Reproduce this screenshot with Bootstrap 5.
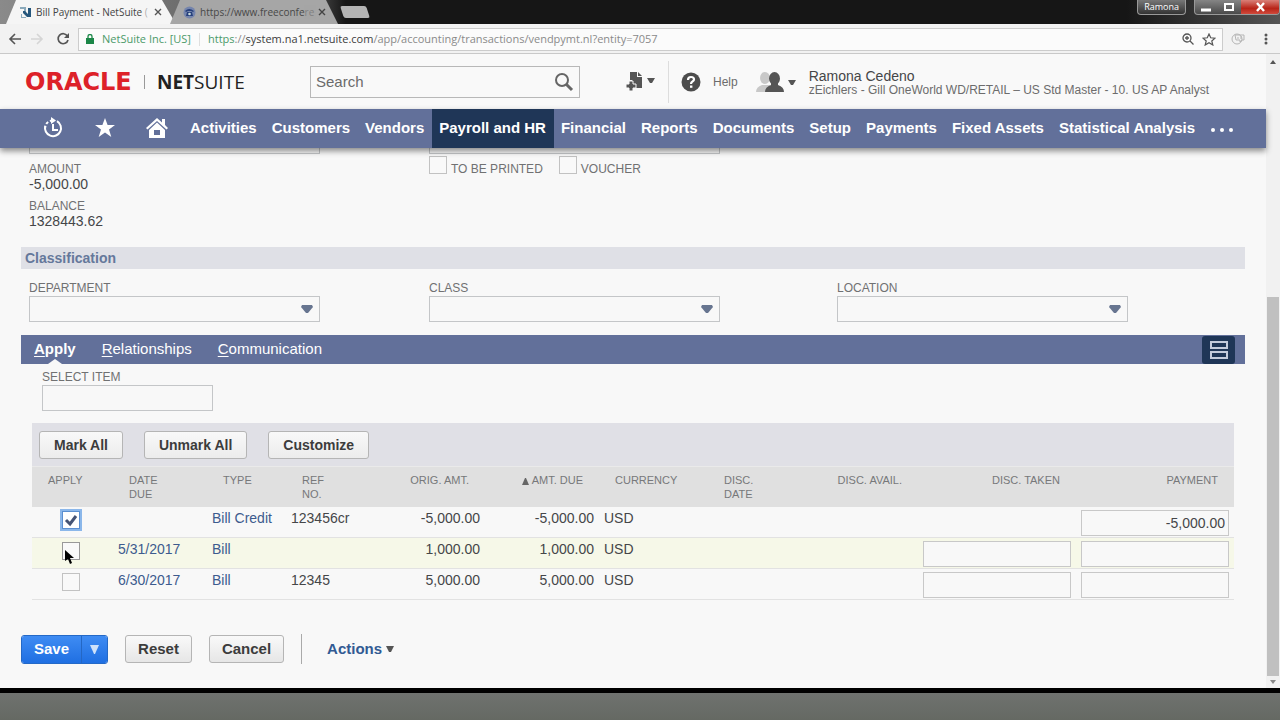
<!DOCTYPE html>
<html lang="en">
<head>
<meta charset="utf-8">
<meta name="viewport" content="width=device-width, initial-scale=1">
<title>Bill Payment - NetSuite</title>
<link href="https://cdn.jsdelivr.net/npm/bootstrap@5.3.0/dist/css/bootstrap.min.css" rel="stylesheet">
<style>
  :root { --bar: #62709a; --navy: #1f3657; --line: #c4c6c8; --paper: #f8f8f8; --label: #707172; --ink: #454648; --blue: #3d5b8e; }
  body { font-family: "Liberation Sans", Arial, sans-serif; font-size: 14px; line-height: 16px; color: var(--ink); background: var(--paper); }
  a { text-decoration: none; color: inherit; }
  svg { display: block; flex: none; }
  .chrome-ui { font-family: "Open Sans", sans-serif; }

  /* browser tabs */
  .tab-strip { height: 24px; background: linear-gradient(90deg, #8a8a8a, #5a5a5a 24%, #161616 27%, #161616 88%, #555); padding-left: 6px; }
  .tab-item { height: 24px; font-size: 10px; color: #444; width: 170px; background: #f5f5f5; clip-path: polygon(10px 0, 156px 0, 100% 100%, 0 100%); padding: 0 14px 0 13px; }
  .tab-item.dim { background: #a6a6a6; margin-left: -6px; width: 168px; color: #484848; }
  .tab-title { white-space: nowrap; flex: 1; }
  .tab-title i { font-style: normal; opacity: .4; }
  .tab-new { width: 26px; height: 12px; background: #b4b4b4; transform: skewX(18deg); border-radius: 2px; }
  .tab-close, .win-btn, .tool-btn { border: 0; background: none; padding: 0; color: inherit; }
  .win-user { height: 15px; border: 1px solid #999; border-top: 0; border-radius: 0 0 4px 4px; background: linear-gradient(#777, #333); color: #fff; font-size: 9px; line-height: 13px; padding: 0 6px; }
  .win-set { height: 15px; border: 1px solid #999; border-top: 0; border-radius: 0 0 4px 4px; overflow: hidden; background: linear-gradient(#858585, #4a4a4a); }
  .win-btn { width: 23px; }
  .win-btn.shut { width: 38px; background: linear-gradient(#d98078, #b82418 60%, #d04a3c); }

  /* address bar */
  .tool-row { height: 30px; background: #f2f2f2; border-bottom: 1px solid #c9c9c9; padding: 4px 10px 3px 8px; }
  .address { background: #fbfbfb; border: 1px solid #ccc; height: 23px; font-size: 11px; color: #8a8a8a; padding: 0 6px 0 7px; }
  .address .site { color: #3b3b3b; }
  .address .secure { color: #4b9a69; }

  /* page header */
  .page-head { height: 55px; padding-left: 25px; background: #f9f9f9; }
  .logo-oracle { font: bold 24px "DejaVu Sans", sans-serif; color: #dd2229; width: 119px; }
  .logo-suite { font: 19px "Open Sans", sans-serif; color: #222; border-left: 1px solid #999; line-height: 14px; padding-left: 12px; width: 166px; }
  .search-box { width: 270px; height: 32px; border: 1px solid #b8b8b8; background: #f9f9f9; }
  .search-box input { border: 0; background: none; outline: 0; font-size: 15px; color: #6b6b6b; padding: 0 5px; width: 100%; }
  .search-box input::placeholder { color: #6b6b6b; opacity: 1; }
  .create-menu { margin-left: 46px; }
  .head-rule { width: 1px; height: 42px; background: #ddd; margin: 0 8px 0 12px; }
  .role-menu { margin-left: 18px; margin-right: 13px; }
  .small-line { font-size: 12px; line-height: 12px; color: #6c6c6c; }

  .main-nav { background: var(--bar); height: 39px; padding-left: 27px; box-shadow: 0 3px 6px rgba(0,0,0,.45); position: relative; z-index: 2; color: #fff; font-weight: bold; font-size: 15px; white-space: nowrap; }
  .main-nav a { display: flex; align-items: center; height: 38px; padding: 0 8px 0 7px; }
  .main-nav a.pic { width: 52px; padding: 0; justify-content: center; }
  .main-nav a.on { background: var(--navy); height: 39px; padding-bottom: 1px; }

  /* form body */
  .sheet { padding: 0 21px; }
  .fld-label { font-size: 12px; line-height: 15px; color: var(--label); display: block; }
  .fld-value { line-height: 14px; }
  .fld { width: 291px; max-width: 95%; height: 26px; border: 1px solid var(--line); background: var(--paper); }
  .fld-item { width: 171px; }
  .item-row { padding: 6px 0 12px 10px; }
  select.fld { appearance: none; background: var(--paper) url("data:image/svg+xml,%3Csvg xmlns='http://www.w3.org/2000/svg' width='12' height='8'%3E%3Cpath d='M1 0H11L12 2 7 8H5L0 2Z' fill='%23677590'/%3E%3C/svg%3E") no-repeat right 6px center; }
  .peek { height: 6px; overflow: hidden; display: flex; align-items: flex-end; }
  .tick { appearance: none; width: 18px; height: 18px; border: 1px solid #c2c2c2; background: #f9f9f9; margin: 0; flex: none; display: block; }
  .tick.hot { border-color: #999; }
  .tick:checked { border-color: #5b8fd0; box-shadow: 0 0 0 2px #8bb7ea; background: #fff url("data:image/svg+xml,%3Csvg xmlns='http://www.w3.org/2000/svg' width='16' height='16'%3E%3Cpath d='M3 8L7 12 13 4' fill='none' stroke='%23455475' stroke-width='3'/%3E%3C/svg%3E") center no-repeat; }
  .tick-row { padding-top: 2px; }
  .tick-row .fld-label { padding-top: 6px; }
  .section-bar { background: #dfe0e6; color: #65789b; font-weight: bold; height: 22px; line-height: 22px; padding-left: 4px; font-size: 14px; margin: 19px 0 0; }
  .sub-tabs { background: var(--bar); height: 29px; color: #fff; font-size: 15px; padding: 0 10px 0 13px; margin-top: 13px; gap: 26px; }
  .sub-tabs a { line-height: 28px; height: 29px; }
  .sub-tabs u { text-underline-offset: 2px; }
  .sub-tabs .on { position: relative; font-weight: bold; }
  .sub-tabs .on::after { content: ""; position: absolute; bottom: 0; left: 50%; margin-left: -7px; border: 7px solid transparent; border-top: 0; border-bottom: 5px solid var(--paper); }
  .view-btn { width: 33px; height: 28px; background: var(--navy); border: 0; border-radius: 3px; }

  .list-area { margin: 0 11px; }
  .list-tools { background: #e0e0e6; height: 43px; padding-left: 7px; gap: 21px; }
  .plain-btn { height: 28px; border: 1px solid #b5b5b5; border-radius: 3px; background: linear-gradient(#f9f9f9, #ececec); color: #3c3c3c; font-weight: bold; font-size: 14px; line-height: 16px; padding: 0 14px; }
  .foot-btns { margin-top: 34px; gap: 17px; }
  .foot-btns .plain-btn { font-size: 15px; padding: 0 12px; background: linear-gradient(#f9f9f9, #e6e6e6); }

  .pay-table { table-layout: fixed; width: 100%; border-collapse: separate; border-spacing: 0; }
  .pay-table th { font-weight: normal; font-size: 11px; line-height: 14px; color: #77787a; height: 41px; background: #e0e0e0; border-top: 1px solid #eaeaea; padding: 6px 16px 0; vertical-align: top; white-space: nowrap; }
  .pay-table td { height: 31px; border-bottom: 1px solid #e2e2e2; padding: 3px 5px 0; vertical-align: top; white-space: nowrap; }
  .pay-table .hover-row td { background: #f6f8e8; }
  .pay-table .cell-fld { width: 100%; height: 26px; border: 1px solid #c8c8c8; background: var(--paper); display: block; text-align: right; padding: 0 3px; color: var(--ink); }
  .pay-table a { color: var(--blue); }
  .pay-table .tick { margin: 1px 0 0 25px; }
  .cursor { position: absolute; left: 33px; top: 12px; }

  .save-pair { height: 29px; border-radius: 3px; overflow: hidden; border: 1px solid #2469c7; }
  .save-pair button { border: 0; background: linear-gradient(#3f8cf3, #1f6fe2); color: #fff; font-weight: bold; font-size: 15px; padding: 0 12px; }
  .save-pair button + button { border-left: 1px solid #2467c4; padding: 0 8px; }
  .foot-rule { width: 1px; height: 30px; background: #aaa; }
  .actions-menu { color: #315a93; font-size: 15px; }

  /* scroll rail and the strip below the window */
  .rail { width: 14px; flex: none; background: #f1f1f1; padding: 4px 1px 3px; }
  .rail-gap { flex: 228; }
  .rail-thumb { flex: 377; background: #c0c0c0; }
  .desk { height: 32px; border-top: 5px solid #000; background: linear-gradient(#6f726f, #656963); }
</style>
</head>
<body class="d-flex flex-column min-vh-100">
<div class="tab-strip d-flex chrome-ui">
  <div class="tab-item d-flex align-items-center gap-1">
    <svg width="13" height="13" viewBox="0 0 13 13"><path d="M1 1h6v7H5V3H1z" fill="#8aa9bb"/><path d="M4 5h2l3 3V2h3v9H8L4 7z" fill="#25567c"/><path d="M3 8v3h4v1H2V8z" fill="#8aa9bb"/></svg>
    <span class="tab-title">Bill Payment - NetSuite <i>(</i></span>
    <button class="tab-close" aria-label="Close tab"><svg width="8" height="8" viewBox="0 0 8 8"><path d="M1 1l6 6M7 1L1 7" stroke="#555" stroke-width="1.4"/></svg></button>
  </div>
  <div class="tab-item dim d-flex align-items-center gap-1">
    <svg width="13" height="13" viewBox="0 0 13 13"><circle cx="6.500" cy="6.500" r="6" fill="#7585ad"/><path d="M2 5q4-4 9 0l-1 1-2-1H5L3 6zM4 6h5l1 4H3z" fill="#27407c"/><circle cx="6.500" cy="8" r="1.300" fill="#cdd"/></svg>
    <span class="tab-title">https://www.freeconfe<i>re</i></span>
    <button class="tab-close" aria-label="Close tab"><svg width="8" height="8" viewBox="0 0 8 8"><path d="M1 1l6 6M7 1L1 7" stroke="#444" stroke-width="1.4"/></svg></button>
  </div>
  <div class="tab-new my-auto ms-1"></div>
  <div class="win-user ms-auto me-2">Ramona</div>
  <div class="win-set d-flex">
    <button class="win-btn" aria-label="Minimize"><svg width="22" height="14"><path d="M6 10h10" stroke="#fff" stroke-width="3"/></svg></button>
    <button class="win-btn" aria-label="Restore"><svg width="22" height="14"><rect x="7" y="4" width="8" height="6" fill="none" stroke="#fff" stroke-width="2"/></svg></button>
    <button class="win-btn shut" aria-label="Close"><svg width="38" height="14"><path d="M16 3l7 8M23 3l-7 8" stroke="#fff" stroke-width="2.400"/></svg></button>
  </div>
</div>

<div class="tool-row d-flex align-items-center chrome-ui">
  <button class="tool-btn" aria-label="Back"><svg width="14" height="14" viewBox="0 0 14 14"><path d="M13 7H2M7 2L2 7l5 5" fill="none" stroke="#555" stroke-width="1.600"/></svg></button>
  <button class="tool-btn ms-2" aria-label="Forward"><svg width="14" height="14" viewBox="0 0 14 14"><path d="M1 7h11M7 2l5 5-5 5" fill="none" stroke="#d5d5d5" stroke-width="1.600"/></svg></button>
  <button class="tool-btn mx-2 ps-1" aria-label="Reload"><svg width="14" height="14" viewBox="0 0 14 14"><path d="M11.500 4.200A5 5 0 1 0 12 8" fill="none" stroke="#555" stroke-width="1.700"/><path d="M13 1v5H8z" fill="#555"/></svg></button>
  <div class="address d-flex align-items-center flex-grow-1">
    <svg width="8" height="10" viewBox="0 0 8 10"><rect y="4" width="8" height="6" fill="#1c8748"/><path d="M2 4V2.500a2 2 0 0 1 4 0V4" fill="none" stroke="#1c8748" stroke-width="1.300"/></svg>
    <span class="ms-2 secure">NetSuite Inc. [US]</span>
    <span class="vr mx-2 my-1"></span>
    <span><span class="secure">https</span>://<span class="site">system.na1.netsuite.com</span>/app/accounting/transactions/vendpymt.nl?entity=7057</span>
    <svg class="ms-auto" width="12" height="12" viewBox="0 0 12 12" fill="none" stroke="#555" stroke-width="1.300"><circle cx="5" cy="5" r="4"/><path d="M8 8l3.500 3.500M5 3v4M3 5h4"/></svg>
    <svg class="ms-2" width="14" height="13" viewBox="0 0 14 13"><path d="M7 1l1.700 3.800 4.300.4-3.200 2.800 1 4L7 9.800 3.200 12l1-4L1 5.200l4.300-.4z" fill="none" stroke="#555" stroke-width="1.200"/></svg>
  </div>
  <svg class="ms-2" width="15" height="14" viewBox="0 0 15 14" fill="none" stroke="#b5b5b5"><circle cx="6" cy="7" r="5"/><path d="M4 3h9v5h-2l-2 2V8H5zM7 5v2M10 4v3"/></svg>
  <svg class="ms-3" width="8" height="14"><circle cx="4" cy="3" r="1.500" fill="#555"/><circle cx="4" cy="7" r="1.500" fill="#555"/><circle cx="4" cy="11" r="1.500" fill="#555"/></svg>
</div>

<div class="d-flex flex-grow-1">
<div class="flex-grow-1">
  <header class="page-head d-flex align-items-center">
    <div class="logo-oracle">ORACLE</div>
    <div class="logo-suite"><b>NET</b>SUITE</div>
    <form class="search-box d-flex align-items-center pe-1">
      <input type="text" placeholder="Search" aria-label="Search">
      <button class="tool-btn" type="button" aria-label="Run search"><svg width="22" height="22" viewBox="0 0 22 22" fill="none" stroke="#666"><circle cx="9" cy="9" r="6" stroke-width="2"/><path d="M13 13l6 6" stroke-width="3"/></svg></button>
    </form>
    <svg class="create-menu" width="30" height="20" viewBox="0 0 30 20" fill="#555"><path d="M4 0h7v5h5v11H9v-4H6V8H4z"/><path d="M12 0l4 4h-4z"/><path d="M3 9h4v3h3v4H7v3H3v-3H0v-4h3z" stroke="#f9f9f9" stroke-width="1"/><path d="M21 6h8l-3 5h-2z"/></svg>
    <span class="head-rule"></span>
    <a href="#" class="d-flex align-items-center small-line ms-1"><svg class="me-2" width="20" height="20" viewBox="0 0 20 20"><circle cx="10" cy="10" r="9.500" fill="#4d4d4d"/><path d="M7 8q0-3 3-3t3 2.500c0 2-3 2-3 4.500" fill="none" stroke="#fff" stroke-width="2.200"/><rect x="9" y="13.500" width="2.400" height="2.300" fill="#fff"/></svg><span class="ms-1">Help</span></a>
    <svg class="role-menu" width="40" height="22" viewBox="0 0 40 22"><g fill="#c8c8c8"><ellipse cx="9" cy="7" rx="5" ry="6"/><path d="M0 21q0-5 6-7h8v7z"/></g><g fill="#555"><ellipse cx="18.500" cy="7.500" rx="5.500" ry="6.500"/><path d="M9 21q0-5 6-7v-3h7v3q6 2 6 7z"/><path d="M32 9h8l-3 5h-2z"/></g></svg>
    <div class="text-nowrap"><div>Ramona Cedeno</div><div class="small-line">zEichlers - Gill OneWorld WD/RETAIL – US Std Master - 10. US AP Analyst</div></div>
  </header>

  <nav class="main-nav d-flex">
    <a href="#" class="pic" aria-label="Recent"><svg width="22" height="22" viewBox="0 0 22 22" fill="none" stroke="#fff" stroke-width="2"><path d="M15 4.200A8 8 0 1 1 3.300 9"/><path d="M11 7v6h5"/><path d="M3 12q0-7 7-8.500" stroke-dasharray="3 2"/><path d="M9 0l5 3.500L9 7z" fill="#fff" stroke="none"/></svg></a>
    <a href="#" class="pic" aria-label="Shortcuts"><svg width="20" height="20" viewBox="0 0 20 20"><path d="M10 0l2.600 7H20l-6 4.600 2.300 7.400L10 14.600 3.700 19 6 11.600 0 7h7.400z" fill="#fff"/></svg></a>
    <a href="#" class="pic" aria-label="Home"><svg width="22" height="22" viewBox="0 0 22 22"><path d="M11 1L0 11l1.500 1.500L11 4l9.500 8.500L22 11l-3-3V2h-3v3.500z" fill="#fff"/><path d="M11 5.500L3 13v8h16v-8zM8 18v-5h6v5z" fill="#fff" fill-rule="evenodd"/></svg></a>
    <a href="#">Activities</a><a href="#">Customers</a><a href="#">Vendors</a><a href="#" class="on">Payroll and HR</a><a href="#">Financial</a><a href="#">Reports</a><a href="#">Documents</a><a href="#">Setup</a><a href="#">Payments</a><a href="#">Fixed Assets</a><a href="#">Statistical Analysis</a>
    <a href="#" aria-label="More"><svg width="24" height="8"><circle cx="3" cy="6" r="2" fill="#fff"/><circle cx="12" cy="6" r="2" fill="#fff"/><circle cx="21" cy="6" r="2" fill="#fff"/></svg></a>
  </nav>

  <main class="sheet">
    <div class="row g-0">
      <div class="col-4 ps-2">
        <div class="peek"><input class="fld" aria-label="Account"></div>
        <div class="mt-2"><span class="fld-label">AMOUNT</span><div class="fld-value">-5,000.00</div></div>
        <div class="mt-2"><span class="fld-label">BALANCE</span><div class="fld-value">1328443.62</div></div>
      </div>
      <div class="col-4">
        <div class="peek"><input class="fld" aria-label="Memo"></div>
        <div class="tick-row d-flex">
          <input type="checkbox" class="tick" id="printed"><label class="fld-label ms-1 me-3" for="printed">TO BE PRINTED</label>
          <input type="checkbox" class="tick" id="voucher"><label class="fld-label ms-1" for="voucher">VOUCHER</label>
        </div>
      </div>
    </div>
    <h2 class="section-bar">Classification</h2>
    <div class="row g-0 pt-2 mt-1">
      <div class="col-4 ps-2"><label class="fld-label" for="dep">DEPARTMENT</label><select class="fld d-block" id="dep"></select></div>
      <div class="col-4"><label class="fld-label" for="cls">CLASS</label><select class="fld d-block" id="cls"></select></div>
      <div class="col-4"><label class="fld-label" for="loc">LOCATION</label><select class="fld d-block" id="loc"></select></div>
    </div>
    <div class="sub-tabs d-flex align-items-center">
      <a href="#" class="on"><u>A</u>pply</a><a href="#"><u>R</u>elationships</a><a href="#"><u>C</u>ommunication</a>
      <button class="view-btn ms-auto d-flex align-items-center justify-content-center" aria-label="Toggle layout"><svg width="18" height="18" fill="none" stroke="#c3cbdc" stroke-width="2"><rect x="1" y="1" width="16" height="6"/><rect x="1" y="11" width="16" height="6"/></svg></button>
    </div>
    <div class="list-area">
      <div class="item-row"><label class="fld-label" for="item">SELECT ITEM</label><input class="fld fld-item d-block" id="item"></div>
      <div class="list-tools d-flex align-items-center">
        <button class="plain-btn">Mark All</button><button class="plain-btn">Unmark All</button><button class="plain-btn">Customize</button>
      </div>
      <table class="pay-table">
        <colgroup><col style="width:81px"><col style="width:94px"><col style="width:79px"><col style="width:100px"><col style="width:99px"><col style="width:114px"><col style="width:109px"><col style="width:101px"><col style="width:109px"><col style="width:158px"><col style="width:158px"></colgroup>
        <thead><tr><th>APPLY</th><th>DATE<br>DUE</th><th>TYPE</th><th>REF<br>NO.</th><th class="text-end">ORIG. AMT.</th><th class="text-end"><svg class="d-inline" width="7" height="7"><path d="M3 0h1l3 7H0z" fill="#666"/></svg> AMT. DUE</th><th>CURRENCY</th><th>DISC.<br>DATE</th><th class="text-end">DISC. AVAIL.</th><th class="text-end">DISC. TAKEN</th><th class="text-end">PAYMENT</th></tr></thead>
        <tbody>
          <tr><td><input type="checkbox" class="tick" checked aria-label="Apply 123456cr"></td><td></td><td><a href="#">Bill Credit</a></td><td>123456cr</td><td class="text-end">-5,000.00</td><td class="text-end">-5,000.00</td><td>USD</td><td></td><td></td><td></td><td><input class="cell-fld" value="-5,000.00" aria-label="Payment"></td></tr>
          <tr class="hover-row"><td class="position-relative"><input type="checkbox" class="tick hot" aria-label="Apply bill of 5/31/2017"><svg class="cursor" width="9" height="14" viewBox="0 0 9 14"><path d="M0 0v11l3-2 2 5 2-1-2-5h4z" fill="#000"/></svg></td><td><a href="#">5/31/2017</a></td><td><a href="#">Bill</a></td><td></td><td class="text-end">1,000.00</td><td class="text-end">1,000.00</td><td>USD</td><td></td><td></td><td><input class="cell-fld" aria-label="Discount taken"></td><td><input class="cell-fld" aria-label="Payment"></td></tr>
          <tr><td><input type="checkbox" class="tick" aria-label="Apply bill 12345"></td><td><a href="#">6/30/2017</a></td><td><a href="#">Bill</a></td><td>12345</td><td class="text-end">5,000.00</td><td class="text-end">5,000.00</td><td>USD</td><td></td><td></td><td><input class="cell-fld" aria-label="Discount taken"></td><td><input class="cell-fld" aria-label="Payment"></td></tr>
        </tbody>
      </table>
    </div>
    <div class="foot-btns d-flex align-items-center">
      <div class="save-pair d-flex"><button>Save</button><button aria-label="Save options"><svg width="9" height="9"><path d="M0 0h9L5 9H4z" fill="#cfe2fa"/></svg></button></div>
      <button class="plain-btn">Reset</button><button class="plain-btn">Cancel</button>
      <span class="foot-rule"></span>
      <a href="#" class="actions-menu fw-bold ms-2 d-flex align-items-center gap-1">Actions <svg width="8" height="6"><path d="M0 0h8L5 6H3z" fill="#555"/></svg></a>
    </div>
  </main>
</div>
<div class="rail d-flex flex-column align-items-center">
  <svg width="12" height="9"><path d="M3 6l3-4 3 4z" fill="#555"/></svg>
  <div class="rail-gap"></div>
  <div class="rail-thumb w-100"></div>
  <svg width="12" height="9"><path d="M3 4l3 4 3-4z" fill="#888"/></svg>
</div>
</div>
<div class="desk"></div>
<script src="https://cdn.jsdelivr.net/npm/bootstrap@5.3.0/dist/js/bootstrap.bundle.min.js"></script>
</body>
</html>
